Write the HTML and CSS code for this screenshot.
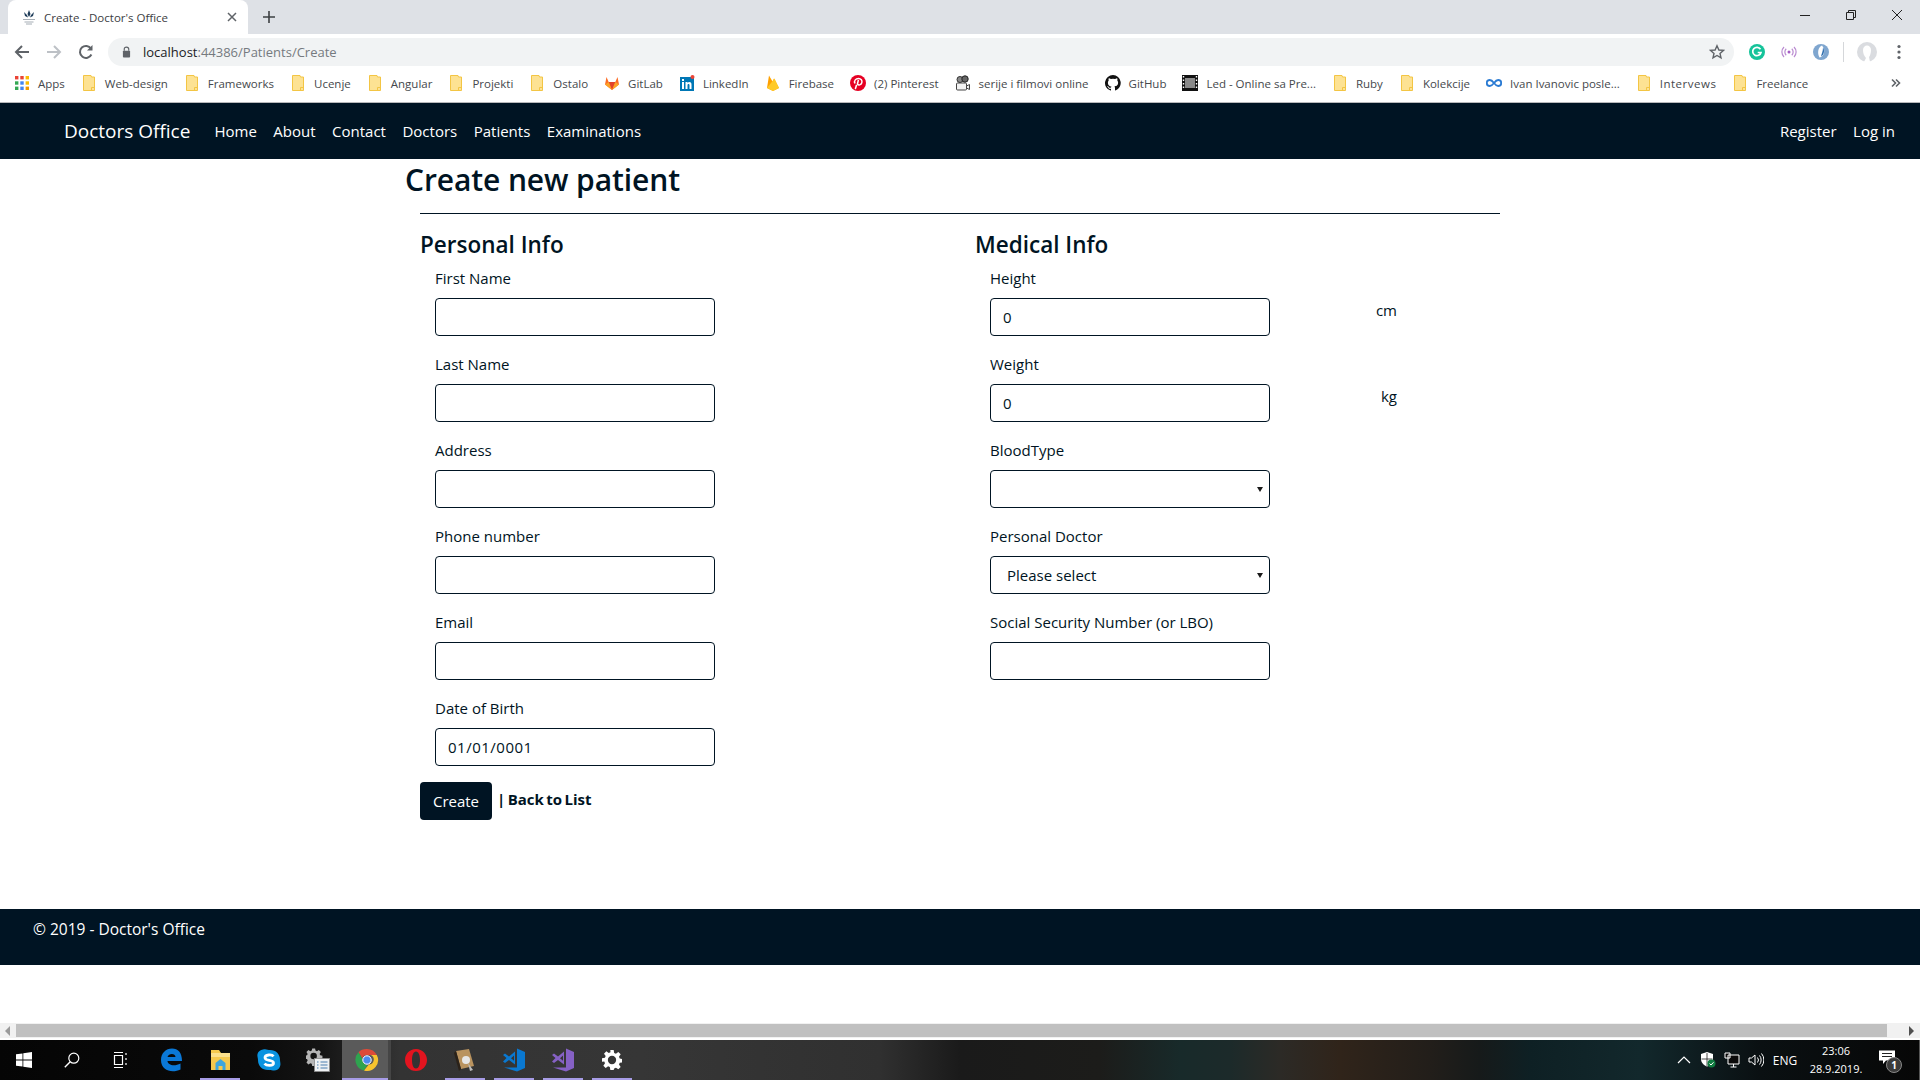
FILE: index.html
```html
<!DOCTYPE html>
<html lang="en">
<head>
<meta charset="utf-8">
<title>Create - Doctor's Office</title>
<link rel="stylesheet" href="styles.css">
</head>
<body>
<svg class="defs" width="0" height="0" aria-hidden="true">
  <symbol id="folder" viewBox="0 0 12 16"><path d="M.5.5h7.500l.5 1.500h3v13.500h-11z" fill="#fde293" stroke="#f3c544"/><path d="M8.500 15.500v-3h3" fill="none" stroke="#f3c544"/></symbol>
</svg>
<div class="screen">
  <div class="tabstrip">
    <div class="tab">
      <svg class="favicon" viewBox="0 0 16 16"><path d="M8 1l1.500 4-1.500 3-1.500-3zM3 3l3 3 1 2.500-3-1.500zM13 3l-3 3-1 2.500 3-1.500z" fill="#1f3d5a"/><path d="M2 10h12v1H2zM3.500 12.500h9v1h-9zM5 14.500h6v1H5z" fill="#a5adb5"/></svg>
      <span class="tab-title">Create - Doctor's Office</span>
      <svg class="tab-close" viewBox="0 0 10 10"><path d="M1 1l8 8M9 1l-8 8" stroke="#5f6368" stroke-width="1.500"/></svg>
    </div>
    <svg class="new-tab" viewBox="0 0 12 12"><path d="M6 0v12M0 6h12" stroke="#3c4043" stroke-width="1.600"/></svg>
    <div class="window-controls">
      <svg viewBox="0 0 12 12"><path d="M1 6.500h10" stroke="#222" /></svg>
      <svg viewBox="0 0 12 12"><path d="M1.500 3.500h7v7h-7zM3.500 3.500v-2h7v7h-2" fill="none" stroke="#222"/></svg>
      <svg viewBox="0 0 12 12"><path d="M1 1l10 10M11 1L1 11" stroke="#222"/></svg>
    </div>
  </div>
  <div class="toolbar">
    <svg class="tool-icon" viewBox="0 0 16 16"><path d="M15 8H2.500M8 2L2 8l6 6" fill="none" stroke="#5f6368" stroke-width="2"/></svg>
    <svg class="tool-icon" viewBox="0 0 16 16"><path d="M1 8h12.500M8 2l6 6-6 6" fill="none" stroke="#bdc1c6" stroke-width="2"/></svg>
    <svg class="tool-icon" viewBox="0 0 16 16"><path d="M13.400 10.500A6 6 0 1 1 13 4.600" fill="none" stroke="#5f6368" stroke-width="2"/><path d="M14.500 1v5.500H9z" fill="#5f6368"/></svg>
    <div class="omnibox">
      <svg class="lock" viewBox="0 0 10 13"><path d="M2.500 5V3.500a2.500 2.500 0 0 1 5 0V5" fill="none" stroke="#5f6368" stroke-width="1.300"/><rect x="1" y="5" width="8" height="7.500" rx="1" fill="#5f6368"/></svg>
      <span class="url"><span class="url-host">localhost</span>:44386/Patients/Create</span>
      <svg class="star" viewBox="0 0 16 16"><path d="M8 1.800l1.900 4.200 4.500.4-3.400 3 1 4.500L8 11.500l-4 2.400 1-4.500-3.400-3 4.500-.4z" fill="none" stroke="#5f6368" stroke-width="1.400"/></svg>
    </div>
    <div class="extensions">
      <svg viewBox="0 0 16 16"><circle cx="8" cy="8" r="8" fill="#15c39a"/><path d="M11.500 5.300A4.200 4.200 0 1 0 12 8.500H8.700" fill="none" stroke="#fff" stroke-width="1.700"/></svg>
      <svg viewBox="0 0 16 16"><circle cx="8" cy="8" r="1.500" fill="#a55cc5"/><path d="M5.200 4.800a4.500 4.500 0 0 0 0 6.400M10.800 4.800a4.500 4.500 0 0 1 0 6.400M3 3a7 7 0 0 0 0 10M13 3a7 7 0 0 1 0 10" fill="none" stroke="#b98ad0" stroke-width="1.200"/></svg>
      <svg viewBox="0 0 16 16"><circle cx="8" cy="8" r="8" fill="#7fa6cf"/><path d="M9 1.500C5 3 4 9 6.500 13.500 11 13 13 6 9 1.500z" fill="#fff"/><path d="M10 3.500c2 3 1 7.500-2 9 .5-3 2-5 2-9z" fill="#2f6fb0"/></svg>
      <span class="ext-divider"></span>
      <svg class="avatar" viewBox="0 0 20 20"><circle cx="10" cy="10" r="10" fill="#dadce0"/><path d="M6 8c0-6 8-6 8 0 0 3-1 6-2 7l1 5H7l2-4c-2-2-3-5-3-8z" fill="#fff"/></svg>
      <svg class="dots" viewBox="0 0 4 16"><circle cx="2" cy="2.500" r="1.600" fill="#5f6368"/><circle cx="2" cy="8" r="1.600" fill="#5f6368"/><circle cx="2" cy="13.500" r="1.600" fill="#5f6368"/></svg>
    </div>
  </div>
  <div class="bookmarks">
    <div class="bm"><svg class="bm-apps" viewBox="0 0 14 14"><rect x="0" y="0" width="3.400" height="3.400" fill="#ea4335"/><rect x="5.300" y="0" width="3.400" height="3.400" fill="#ea4335"/><rect x="10.600" y="0" width="3.400" height="3.400" fill="#fbbc04"/><rect x="0" y="5.300" width="3.400" height="3.400" fill="#34a853"/><rect x="5.300" y="5.300" width="3.400" height="3.400" fill="#4285f4"/><rect x="10.600" y="5.300" width="3.400" height="3.400" fill="#fbbc04"/><rect x="0" y="10.600" width="3.400" height="3.400" fill="#34a853"/><rect x="5.300" y="10.600" width="3.400" height="3.400" fill="#4285f4"/><rect x="10.600" y="10.600" width="3.400" height="3.400" fill="#f29900"/></svg><span>Apps</span></div>
    <div class="bm"><svg class="bm-folder"><use href="#folder"/></svg><span>Web-design</span></div>
    <div class="bm"><svg class="bm-folder"><use href="#folder"/></svg><span>Frameworks</span></div>
    <div class="bm"><svg class="bm-folder"><use href="#folder"/></svg><span>Ucenje</span></div>
    <div class="bm"><svg class="bm-folder"><use href="#folder"/></svg><span>Angular</span></div>
    <div class="bm"><svg class="bm-folder"><use href="#folder"/></svg><span>Projekti</span></div>
    <div class="bm"><svg class="bm-folder"><use href="#folder"/></svg><span>Ostalo</span></div>
    <div class="bm"><svg class="bm-icon" viewBox="0 0 16 16"><path d="M8 15L1 9.500 2.500 2l2.200 5h6.600L13.500 2 15 9.500z" fill="#fc6d26"/><path d="M8 15L4.700 7h6.600z" fill="#e24329"/><path d="M1 9.500L8 15 4.700 7zM15 9.500L8 15l3.300-8z" fill="#fca326"/></svg><span>GitLab</span></div>
    <div class="bm"><svg class="bm-icon" viewBox="0 0 16 16"><rect x="1" y="2" width="14" height="14" fill="#0077b5"/><path d="M3 7h2v7H3zM3 4h2v2H3zM6.500 7h2v1c1-1.500 4-1.500 4 1.500V14h-2v-4c0-1.500-2-1.500-2 0v4h-2z" fill="#fff"/><circle cx="13.500" cy="2" r="2" fill="#ea4335"/></svg><span>LinkedIn</span></div>
    <div class="bm"><svg class="bm-icon" viewBox="0 0 16 16"><path d="M2 13L4 .5l3.500 6L9 3.500l5 9.500-6 3z" fill="#ffa000"/><path d="M8 16l-6-3L9.500 3.500 14 13z" fill="#ffca28"/></svg><span>Firebase</span></div>
    <div class="bm"><svg class="bm-icon" viewBox="0 0 16 16"><circle cx="8" cy="8" r="8" fill="#e60023"/><path d="M6.500 9.800C6 12 5.800 13 5.200 14M5 8.500C3.500 5.500 6 3.500 8.500 3.500c2.500 0 4 2 3.300 4.300-.7 2.400-3.400 2.700-4.400 1.200l1-4" fill="none" stroke="#fff" stroke-width="1.500"/></svg><span>(2) Pinterest</span></div>
    <div class="bm"><svg class="bm-icon" viewBox="0 0 16 16"><rect x="1.500" y="8" width="10" height="7" rx="1" fill="#f2f2f2" stroke="#444"/><circle cx="5" cy="4.500" r="3" fill="#888" stroke="#333"/><circle cx="10" cy="4" r="3.200" fill="#666" stroke="#222"/><path d="M11.500 11l3-1.500v5l-3-1.500z" fill="#eee" stroke="#444"/></svg><span>serije i filmovi online</span></div>
    <div class="bm"><svg class="bm-icon" viewBox="0 0 16 16"><path d="M8 0a8 8 0 0 0-2.500 15.600c.4.100.5-.2.500-.4v-1.400c-2.200.500-2.700-1-2.700-1-.4-.9-.9-1.200-.9-1.200-.7-.5.100-.5.100-.5.800.1 1.200.8 1.200.8.700 1.200 1.900.9 2.300.7.100-.5.300-.9.500-1.100-1.800-.2-3.600-.9-3.600-4 0-.9.300-1.600.8-2.100-.1-.2-.4-1 .1-2.100 0 0 .7-.2 2.200.8a7.600 7.600 0 0 1 4 0c1.500-1 2.200-.8 2.200-.8.400 1.100.200 1.900.1 2.100.5.600.8 1.300.8 2.100 0 3.100-1.900 3.700-3.700 3.900.3.300.6.800.6 1.500v2.200c0 .2.100.5.500.4A8 8 0 0 0 8 0z" fill="#111"/></svg><span>GitHub</span></div>
    <div class="bm"><svg class="bm-icon" viewBox="0 0 16 16"><rect width="16" height="16" fill="#111"/><rect x="3" y="3" width="10" height="10" fill="#8a8a8a"/><path d="M.8 1h1.400v1.500H.8zM.8 4.500h1.400V6H.8zM.8 8h1.400v1.500H.8zM.8 11.500h1.400V13H.8zM13.800 1h1.400v1.500h-1.400zM13.800 4.500h1.400V6h-1.400zM13.800 8h1.400v1.500h-1.400zM13.800 11.500h1.400V13h-1.400z" fill="#fff"/></svg><span>Led - Online sa Pre...</span></div>
    <div class="bm"><svg class="bm-folder"><use href="#folder"/></svg><span>Ruby</span></div>
    <div class="bm"><svg class="bm-folder"><use href="#folder"/></svg><span>Kolekcije</span></div>
    <div class="bm"><svg class="bm-icon" viewBox="0 0 16 16"><path d="M8 8C6.500 6 5.500 5 3.800 5a3 3 0 0 0 0 6C5.500 11 6.500 10 8 8s2.500-3 4.200-3a3 3 0 0 1 0 6C10.500 11 9.500 10 8 8z" fill="none" stroke="#2b7bd3" stroke-width="1.800"/></svg><span>Ivan Ivanovic posle...</span></div>
    <div class="bm"><svg class="bm-folder"><use href="#folder"/></svg><span class="bm-wide">Intervews</span></div>
    <div class="bm"><svg class="bm-folder"><use href="#folder"/></svg><span>Freelance</span></div>
    <svg class="bm-more" viewBox="0 0 10 10"><path d="M1 1.500L4.500 5 1 8.500M5 1.500L8.500 5 5 8.500" fill="none" stroke="#5f6368" stroke-width="1.600"/></svg>
  </div>

  <nav class="navbar">
    <a class="brand">Doctors Office</a>
    <ul class="nav-links">
      <li>Home</li><li>About</li><li>Contact</li><li>Doctors</li><li>Patients</li><li>Examinations</li>
    </ul>
    <ul class="nav-links nav-right">
      <li>Register</li><li>Log in</li>
    </ul>
  </nav>

  <main class="main">
    <h1 class="page-title">Create new patient</h1>
    <hr class="rule">
    <form class="form-grid">
      <section class="col">
        <h3 class="col-title">Personal Info</h3>
        <div class="field"><label>First Name</label><input type="text"></div>
        <div class="field"><label>Last Name</label><input type="text"></div>
        <div class="field"><label>Address</label><input type="text"></div>
        <div class="field"><label>Phone number</label><input type="text"></div>
        <div class="field"><label>Email</label><input type="text"></div>
        <div class="field"><label>Date of Birth</label><input type="text" value="01/01/0001"></div>
      </section>
      <section class="col">
        <h3 class="col-title">Medical Info</h3>
        <div class="field"><label>Height</label><div class="with-unit"><input type="text" value="0"><span class="unit">cm</span></div></div>
        <div class="field"><label>Weight</label><div class="with-unit"><input type="text" value="0"><span class="unit">kg</span></div></div>
        <div class="field"><label>BloodType</label><div class="select-wrap"><select><option></option></select></div></div>
        <div class="field"><label>Personal Doctor</label><div class="select-wrap"><select><option>Please select</option></select></div></div>
        <div class="field"><label>Social Security Number (or LBO)</label><input type="text"></div>
      </section>
    </form>
    <div class="actions">
      <button type="button" class="btn">Create</button>
      <span class="back">| Back to List</span>
    </div>
  </main>

  <footer class="footer">© 2019 - Doctor's Office</footer>
  <div class="after-footer"></div>

  <div class="hscroll">
    <svg class="hs-arrow" viewBox="0 0 6 10"><path d="M5 0v10L0 5z" fill="#9a9a9a"/></svg>
    <div class="hs-thumb"></div>
    <svg class="hs-arrow hs-right" viewBox="0 0 6 10"><path d="M1 0v10l5-5z" fill="#505050"/></svg>
  </div>

  <div class="taskbar">
    <div class="tb-sys">
      <svg viewBox="0 0 16 16"><path d="M0 2.300l6.500-.9v6.200H0zM7.300 1.300L16 0v7.600H7.300zM0 8.400h6.500v6.200L0 13.700zM7.300 8.400H16V16l-8.700-1.300z" fill="#fff"/></svg>
    </div>
    <div class="tb-sys">
      <svg viewBox="0 0 16 16"><circle cx="9.800" cy="6.200" r="5" fill="none" stroke="#fff" stroke-width="1.200"/><path d="M6.200 9.800L.8 15.200" stroke="#fff" stroke-width="1.400"/></svg>
    </div>
    <div class="tb-sys">
      <svg viewBox="0 0 16 16"><path d="M2 .5h9M2 15.500h9M2.500 3.500h8v9h-8zM14 1v2M14 6v2M14 11v2" fill="none" stroke="#fff" stroke-width="1.200"/></svg>
    </div>
    <div class="tb-app">
      <svg viewBox="0 0 24 24"><path d="M2 12C2 5 7 .5 13 .5c6 0 10 4 10 12.500H8.500c.3 4 6.500 6 13 2.500v6c-8 4-19.500 1.500-19.500-9.500zM8.500 9h8c0-4-7-4-8 0z" fill="#0a78d7"/></svg>
    </div>
    <div class="tb-app tb-running">
      <svg viewBox="0 0 24 24"><path d="M3 2h8l2 3h9v17H3z" fill="#f5c94e"/><path d="M3 5h19v4H3z" fill="#fbe08c"/><path d="M12.500 11l5 4v7h-3v-4h-4v4h-3v-7z" fill="#3ea6dd"/></svg>
    </div>
    <div class="tb-app">
      <svg viewBox="0 0 24 24"><path d="M6 1.500c3-1 5 .5 7 .5 6 0 10 4 10 10 0 2 1 4 0 6.500-1 3-4 4.500-7 4-2-.3-3-.5-5-.5-6 0-10-4-10-10 0-2-1-4-.5-6C1 3.500 3.500 2 6 1.500z" fill="#0a93e0"/><path d="M16.500 8.300C15 6.300 8 6.300 8 9.800c0 3.500 8.500 1.800 8.500 5.200 0 3.300-7 3-9 .7" fill="none" stroke="#fff" stroke-width="2.800"/></svg>
    </div>
    <div class="tb-app">
      <svg viewBox="0 0 24 24"><g transform="translate(-1 -1) scale(.72)"><path fill-rule="evenodd" d="M10 2h4l.6 3 2 .9 2.600-1.700 2.800 2.800-1.700 2.600.9 2 3 .6v4l-3 .6-.9 2 1.700 2.600-2.800 2.800-2.600-1.700-2 .9-.6 3h-4l-.6-3-2-.9-2.600 1.700-2.800-2.800 1.700-2.600-.9-2-3-.6v-4l3-.6.9-2-1.700-2.600 2.800-2.800 2.600 1.700 2-.9zm2 6a4.500 4.500 0 1 0 0 9 4.500 4.500 0 0 0 0-9z" fill="#b5b5b5"/></g><rect x="8.500" y="10.500" width="15" height="13" fill="#eef1f3" stroke="#8b8b8b" stroke-width=".8"/><path d="M11 14h1.500M14.500 14h7M11 17h1.500M14.500 17h7M11 20h1.500M14.500 20h7" stroke="#4a7fb0" stroke-width="1.200"/></svg>
    </div>
    <div class="tb-app tb-active">
      <svg viewBox="0 0 24 24"><path d="M12 1a11 11 0 0 1 9.800 6H12a5 5 0 0 0-4.800 3.500L3.500 4.300A11 11 0 0 1 12 1z" fill="#dd4b39"/><path d="M3.500 4.300l4 6.700a5 5 0 0 0 4.800 6l-3.400 5.600A11 11 0 0 1 3.500 4.300z" fill="#2ea44f"/><path d="M21.800 7A11 11 0 0 1 9 22.600l4.800-6A5 5 0 0 0 15.700 7z" fill="#f7c42e"/><circle cx="12" cy="12" r="4.200" fill="#4a8af0" stroke="#fff" stroke-width="1"/></svg>
    </div>
    <div class="tb-app">
      <svg viewBox="0 0 24 24"><path fill-rule="evenodd" d="M12 1c6.500 0 11 5 11 11s-4.500 11-11 11S1 18 1 12 5.500 1 12 1zm0 2.500c-2.500 0-4 3.500-4 8.500s1.500 8.500 4 8.500 4-3.500 4-8.500-1.500-8.500-4-8.500z" fill="#e3141f"/></svg>
    </div>
    <div class="tb-app tb-running">
      <svg viewBox="0 0 24 24"><path d="M3 3l13-2 5 17-13 3z" fill="#b9935f"/><path d="M3 3l5 18-2 2L1 5z" fill="#2b2219"/><circle cx="13" cy="12" r="4" fill="#e6e6e6"/><path d="M15 15l5 7-3 1z" fill="#bbb"/></svg>
    </div>
    <div class="tb-app tb-running">
      <svg viewBox="0 0 24 24"><path fill-rule="evenodd" d="M1 7l2-1.500 4 3L13 3.500v13L7 12l-4 3-2-1.500 3.500-3.500zM12 7.500L9 10.300l3 2.400z" fill="#0a78d0"/><path d="M15 .5l8 3.500v16l-8 3.500-13-4h13z" fill="#0a78d0"/></svg>
    </div>
    <div class="tb-app tb-running">
      <svg viewBox="0 0 24 24"><path fill-rule="evenodd" d="M1 7l2-1.500 4 3L13 3.500v13L7 12l-4 3-2-1.500 3.500-3.500zM12 7.500L9 10.300l3 2.400z" fill="#8661c5"/><path d="M15 .5l8 3.500v16l-8 3.500-13-4h13z" fill="#8661c5"/></svg>
    </div>
    <div class="tb-app tb-running tb-gear">
      <svg viewBox="0 0 24 24"><path fill-rule="evenodd" d="M10 0h4l.6 3.500 2.100.9 2.900-2 2.800 2.800-2 2.900.9 2.100 3.500.6v4l-3.500.6-.9 2.100 2 2.900-2.800 2.800-2.900-2-2.100.9L14 24h-4l-.6-3.500-2.100-.9-2.900 2-2.800-2.800 2-2.900-.9-2.100L0 14v-4l3.500-.6.9-2.100-2-2.900L5.200 1.600l2.900 2 2.100-.9zm2 7a5 5 0 1 0 0 10 5 5 0 0 0 0-10z" fill="#fff"/></svg>
    </div>
    <div class="tray">
      <svg class="tray-chevron" viewBox="0 0 14 8"><path d="M1 7l6-6 6 6" fill="none" stroke="#fff" stroke-width="1.200"/></svg>
      <svg class="tray-icon" viewBox="0 0 16 16"><path d="M7 0l6 2v5c0 3.500-2.500 6-6 7.500C3.500 13 1 10.500 1 7V2z" fill="#fff"/><path d="M7 1v13M1.500 7h11" stroke="#222" stroke-width=".8"/><circle cx="11.500" cy="11.500" r="4" fill="#107c41"/><path d="M9.500 11.500l1.500 1.500 2.500-2.700" fill="none" stroke="#fff"/></svg>
      <svg class="tray-icon" viewBox="0 0 16 16"><path d="M4 3h11v9H4zM1 1h5v5H1zM9.500 12v3M6.500 15h6" fill="#0a0a0a" stroke="#fff"/></svg>
      <svg class="tray-icon" viewBox="0 0 16 16"><path d="M1 6h2.500L7 3v10L3.500 10H1zM9.500 5.500a4 4 0 0 1 0 5M11.500 3.500a7 7 0 0 1 0 9M13.500 1.500a10 10 0 0 1 0 13" fill="none" stroke="#fff"/></svg>
      <span class="tray-lang">ENG</span>
      <div class="tray-clock"><span>23:06</span><span>28.9.2019.</span></div>
      <div class="tray-notify">
        <svg viewBox="0 0 16 14"><path d="M0 0h16v10H7l-3 3.500V10H0z" fill="#fff"/><path d="M3 3h10M3 6h10" stroke="#222"/></svg>
        <span class="notify-badge">1</span>
      </div>
      <span class="tray-end"></span>
    </div>
  </div>
</div>
</body>
</html>
```
FILE: styles.css
```css
* { box-sizing: border-box; }
html, body { margin: 0; padding: 0; height: 100%; overflow: hidden; background: #fff; }
body { font-family: "Open Sans", "Noto Sans", sans-serif; color: #001423; }
.defs { display: block; height: 0; }
.screen { display: flex; flex-direction: column; width: 1920px; height: 1080px; }

/* browser chrome */
.tabstrip { display: flex; align-items: flex-end; height: 34px; padding-left: 8px; background: #dee1e6; flex: none; }
.tab { display: flex; align-items: center; width: 240px; height: 34px; padding: 0 11px 0 13px; background: #fff; border-radius: 8px 8px 0 0; }
.favicon { width: 16px; height: 16px; margin-right: 7px; flex: none; }
.tab-title { flex: 1; font-size: 11.500px; color: #3c4043; white-space: nowrap; }
.tab-close { width: 10px; height: 10px; flex: none; }
.new-tab { width: 12px; height: 12px; margin: 0 0 11px 15px; flex: none; }
.window-controls { display: flex; gap: 34px; margin: 0 0 13px auto; padding-right: 17px; align-self: flex-end; }
.window-controls svg { width: 12px; height: 12px; }

.toolbar { display: flex; align-items: center; height: 32px; padding: 4px 0 0 14px; background: #fff; flex: none; }
.tool-icon { width: 16px; height: 16px; margin-right: 16px; flex: none; }
.omnibox { display: flex; align-items: center; width: 1626px; height: 28px; margin-left: -2px; padding: 0 9px 0 14px; background: #f1f3f4; border-radius: 14px; flex: none; }
.lock { width: 9px; height: 12px; margin-right: 12px; flex: none; }
.url { flex: 1; font-size: 13px; color: #757a7f; white-space: nowrap; }
.url-host { color: #202124; }
.star { width: 16px; height: 16px; margin-right: 0; flex: none; }
.extensions { display: flex; align-items: center; flex: 1; padding-left: 15px; }
.extensions svg { width: 16px; height: 16px; margin-right: 16px; flex: none; }
.extensions .ext-divider { width: 1px; height: 20px; margin: 0 13px 0 -2px; background: #d5d7da; }
.extensions .avatar { width: 20px; height: 20px; margin-right: 20px; }
.extensions .dots { width: 4px; margin: 0; }

.bookmarks { display: flex; align-items: center; gap: 18px; height: 37px; padding: 0 0 2px 15px; background: #fff; border-bottom: 1px solid #b8b9bb; flex: none; }
.bm { display: flex; align-items: center; gap: 8px; font-size: 11.500px; color: #45484c; white-space: nowrap; }
.bm-apps { width: 14px; height: 14px; margin-right: 1px; }
.bm-folder { width: 12px; height: 16px; margin-right: 2px; }
.bm-icon { width: 16px; height: 16px; margin-left: -2px; }
.bm-wide { letter-spacing: .5px; }
.bm-more { width: 10px; height: 10px; margin-left: auto; margin-right: 19px; }

/* application */
.navbar { display: flex; align-items: center; height: 56px; padding: 0 25px 0 64px; background: #001423; color: #fff; flex: none; }
.brand { font-size: 19px; margin-right: 24px; color: #fff; white-space: nowrap; }
.nav-links { display: flex; gap: 16.500px; margin: 0; padding: 0; list-style: none; font-size: 15px; }
.nav-right { margin-left: auto; }

.main { width: 1110px; margin-left: 405px; flex: none; height: 750px; }
.page-title { margin: 0; height: 54px; font-size: 30px; line-height: 42px; font-weight: 600; letter-spacing: -.1px; }
.rule { height: 1px; margin: 0 15px; border: 0; background: #001423; }
.form-grid { display: grid; grid-template-columns: 555px 1fr; padding: 16px 0 0 15px; }
.col-title { margin: 0 0 6px; font-size: 22.500px; line-height: 30px; font-weight: 600; }
.field { display: flex; flex-direction: column; align-items: flex-start; height: 86px; padding-left: 15px; }
.field label { font-size: 15px; line-height: 24px; margin-bottom: 8px; }
.field input, .field select { width: 280px; height: 38px; padding: 6px 12px; border: 1px solid #001423; border-radius: 4px; background: #fff; font: inherit; font-size: 15px; color: #001423; outline: none; flex: none; }
.field input { letter-spacing: .5px; }
.field select { appearance: none; padding-left: 16px; }
.select-wrap { position: relative; width: 280px; height: 38px; }
.select-wrap::after { content: ""; position: absolute; right: 7px; top: 17px; border-style: solid; border-width: 5px 3px 0; border-color: #1a1a1a transparent transparent; pointer-events: none; }
.with-unit { display: flex; align-items: flex-start; width: 407px; justify-content: space-between; }
.unit { font-size: 15px; line-height: 24px; }
.actions { display: flex; align-items: center; gap: 5px; margin: 0 0 0 15px; }
.btn { width: 72px; height: 38px; padding: 0; border: 0; border-radius: 4px; background: #001423; color: #fff; font: inherit; font-size: 15px; }
.back { font-size: 15px; font-weight: 700; word-spacing: -1.500px; margin-top: -5px; }

.footer { display: flex; align-items: flex-start; height: 56px; padding: 8px 0 0 33px; background: #001423; color: #fff; font-size: 15.500px; line-height: 24px; flex: none; }
.after-footer { flex: 1; }

.hscroll { display: flex; align-items: center; height: 17px; background: #f1f1f1; border-bottom: 2px solid #fff; flex: none; }
.hs-arrow { width: 6px; height: 10px; margin: 0 5px; flex: none; }
.hs-thumb { width: 1871px; height: 13px; margin-left: 0; background: #c0c0c0; flex: none; }
.hs-right { margin-left: 21px; }

.taskbar { display: flex; align-items: center; height: 40px; background: linear-gradient(90deg, #050505 0, #0a0a0a 250px, #141414 320px, #333 400px, #363636 640px, #303030 880px, #1a1a1a 960px, #1c1c1a 1100px, #182a2a 1180px, #1c2a2a 1230px, #2c2a26 1280px, #30241a 1340px, #221e1a 1430px, #161a1a 1480px, #0e2024 1530px, #12282c 1640px, #0a1012 1760px, #070707 1920px); flex: none; }
.tb-sys { display: flex; align-items: center; justify-content: center; width: 48px; height: 40px; flex: none; }
.tb-sys svg { width: 16px; height: 16px; }
.tb-app { display: flex; align-items: center; justify-content: center; width: 49px; height: 40px; flex: none; }
.tb-app:nth-child(4) { margin-left: 2px; }
.tb-app svg { width: 24px; height: 24px; }
.tb-running { background: linear-gradient(#a79ce6, #a79ce6) center bottom / 40px 2px no-repeat; }
.tb-active { background: #5a5a5a; box-shadow: inset -3px 0 0 #454545, inset 0 -2px 0 #a79ce6; }
.tb-gear svg { width: 20px; height: 20px; }
.tray { display: flex; align-items: center; margin-left: auto; height: 40px; color: #fff; }
.tray-chevron { width: 14px; height: 8px; margin-right: 9px; }
.tray-icon { width: 16px; height: 16px; margin-right: 8px; }
.tray-lang { width: 32px; margin: 0 -3px 0 -3px; font-size: 12px; text-align: center; }
.tray-clock { display: flex; flex-direction: column; align-items: center; width: 72px; margin: 0 2px; font-size: 11px; line-height: 18px; }
.tray-notify { position: relative; width: 30px; height: 24px; margin-left: 5px; }
.tray-notify svg { width: 16px; height: 15px; margin-top: 2px; }
.notify-badge { position: absolute; left: 7px; top: 9px; width: 16px; height: 16px; border-radius: 50%; background: #3a3a3a; border: 1px solid #888; font-size: 10px; line-height: 14px; text-align: center; font-weight: 700; }
.tray-end { width: 1px; height: 40px; margin-left: 10px; background: #555; }
```
